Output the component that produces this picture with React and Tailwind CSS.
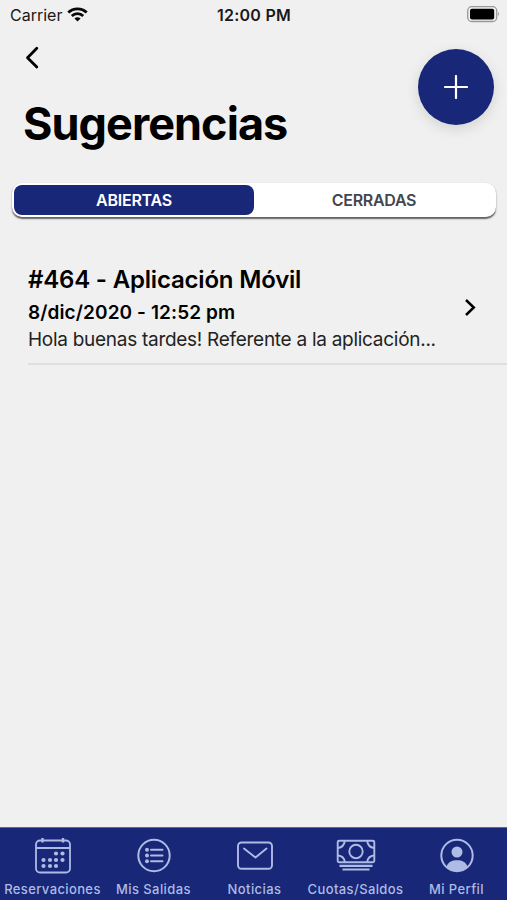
const tabs = [
  { label: 'Reservaciones', icon: CalendarIcon, spacing: 'tracking-[0.38px]' },
  { label: 'Mis Salidas', icon: ListIcon, spacing: 'tracking-[0.4px]' },
  { label: 'Noticias', icon: MailIcon, spacing: 'tracking-[0.45px]' },
  { label: 'Cuotas/Saldos', icon: CashIcon, spacing: 'tracking-[0.38px]' },
  { label: 'Mi Perfil', icon: ProfileIcon, spacing: 'tracking-[0.4px]' },
];

function CalendarIcon() {
  const dots = [
    [21, 15.5], [27.5, 15.5],
    [8.5, 22], [15, 22], [21, 22], [27.5, 22],
    [8.5, 28], [15, 28], [21, 28],
  ];
  return (
    <svg width="36" height="36" viewBox="0 0 36 36" fill="none" stroke="currentColor" strokeWidth="1.8">
      <rect x="1" y="2.5" width="34" height="32" rx="4" />
      <path d="M1 10H35" />
      <path d="M7.5 0v4.5M28 0v4.5" strokeWidth="2.4" />
      {dots.map(([x, y]) => (
        <circle key={`${x}-${y}`} cx={x} cy={y} r="2.1" fill="currentColor" stroke="none" />
      ))}
    </svg>
  );
}

function ListIcon() {
  return (
    <svg width="36" height="36" viewBox="0 0 36 36" fill="none" stroke="currentColor" strokeWidth="2">
      <circle cx="18" cy="17.5" r="15.7" />
      <path d="M15 11.7H26.500M15 17.500H26.500M15 23.300H26.500" strokeLinecap="round" />
      <g fill="currentColor" stroke="none">
        <circle cx="11" cy="11.7" r="2" />
        <circle cx="11" cy="17.5" r="2" />
        <circle cx="11" cy="23.3" r="2" />
      </g>
    </svg>
  );
}

function MailIcon() {
  return (
    <svg width="36" height="36" viewBox="0 0 36 36" fill="none" stroke="currentColor" strokeWidth="1.9" strokeLinecap="round" strokeLinejoin="round">
      <rect x="1" y="4.5" width="34" height="26.3" rx="3.5" />
      <path d="M7 10.500l11.500 9L29.500 10.500" />
    </svg>
  );
}

function CashIcon() {
  return (
    <svg width="40" height="36" viewBox="0 0 40 36" fill="none" stroke="currentColor" strokeWidth="1.9">
      <rect x="1.700" y="2.800" width="36.600" height="21.500" rx="1.500" />
      <circle cx="20" cy="13.500" r="6.700" />
      <path d="M2 10Q8 9 8.800 3M38 10Q32 9 31.200 3M2 17.500Q8 18 8.800 24M38 17.500Q32 18 31.200 24" />
      <path d="M3.500 27.800H36.500M6.500 31.500H33.500" strokeWidth="2.200" />
    </svg>
  );
}

function ProfileIcon() {
  return (
    <svg width="36" height="36" viewBox="0 0 36 36" fill="none" stroke="currentColor" strokeWidth="2">
      <circle cx="18" cy="17.500" r="15.700" />
      <circle cx="18" cy="14" r="5.500" fill="currentColor" stroke="none" />
      <path d="M7.500 28.500C9 24 13 22.200 18 22.200S27 24 28.500 28.500C25.500 31.500 22 33.300 18 33.300S10.500 31.500 7.500 28.500Z" fill="currentColor" stroke="none" />
    </svg>
  );
}

function StatusBar() {
  return (
    <div className="grid h-[30px] grid-cols-3 items-center pl-[10px] pr-[7px] text-[#191919]">
      <div className="flex items-center gap-[5px]">
        <span className="text-[16px] leading-5">Carrier</span>
        <svg width="21" height="16" viewBox="0 0 21 16" fill="none" stroke="#080808" strokeWidth="2.800">
          <path d="M1.300 5.600C6.300.6 14.700.6 19.700 5.600M4.800 9C8 5.900 13 5.900 16.200 9" />
          <path d="M10.500 14.600L7.400 11.500Q10.500 9 13.600 11.500Z" fill="#080808" stroke="none" />
        </svg>
      </div>
      <span className="whitespace-nowrap pr-[2px] text-center text-[16px] font-semibold leading-5 tracking-[0.25px]">12:00 PM</span>
      <svg className="justify-self-end" width="33" height="18" viewBox="0 0 33 18">
        <rect x="0.700" y="0.700" width="29" height="14.800" rx="4" fill="none" stroke="#999" strokeWidth="1.300" />
        <rect x="3" y="2.800" width="24.200" height="10.600" rx="2" fill="#000" />
        <path d="M31 6q2 2 0 4z" fill="#999" />
      </svg>
    </div>
  );
}

export default function App() {
  return (
    <div className="flex h-[900px] w-[507px] flex-col overflow-hidden bg-[#f0f0f0] font-['Inter','Liberation_Sans',sans-serif] text-black">
      <StatusBar />
      <header className="flex h-[153px] justify-between pl-[23px] pr-[13px]">
        <div className="pt-[16px]">
          <button aria-label="Volver" className="block">
            <svg width="18" height="24" viewBox="0 0 18 24" fill="none" stroke="currentColor" strokeWidth="2.800" strokeLinecap="round" strokeLinejoin="round">
              <path d="M13.800 2.300L4.500 11.700L13.800 21.100" />
            </svg>
          </button>
          <h1 className="mt-[27px] text-[45px] font-bold leading-[54px] tracking-[-0.95px]">Sugerencias</h1>
        </div>
        <button aria-label="Agregar" className="mt-[19px] flex size-[76px] items-center justify-center rounded-full bg-[#182777] text-white shadow-[0_4px_14px_rgba(0,0,0,0.12)]">
          <svg width="24" height="24" viewBox="0 0 24 24" stroke="currentColor" strokeWidth="2.200" strokeLinecap="round">
            <path d="M12 1V23M1 12H23" />
          </svg>
        </button>
      </header>

      <div className="ml-[12px] mr-[11px] flex h-[34px] rounded-[10px] bg-white p-[2px] text-[16px] font-semibold shadow-[0_1.5px_1.5px_rgba(0,0,0,0.6)]">
        <button className="flex w-[240px] items-center justify-center rounded-[8px] bg-[#182777] tracking-[-0.25px] text-white">ABIERTAS</button>
        <button className="flex flex-1 items-center justify-center tracking-[-0.3px] text-[#434650]">CERRADAS</button>
      </div>

      <main className="flex-1 pl-[28px] pt-[47px]">
        <article className="flex h-[101px] items-center justify-between border-b-2 border-[#dfdfe0] pb-[10px] pr-[29px]">
          <div>
            <h2 className="text-[24px] font-semibold leading-[32px] tracking-[-0.19px]">#464 - Aplicación Móvil</h2>
            <p className="mt-[3px] text-[19px] font-semibold leading-[27px] tracking-[0.1px]">8/dic/2020 - 12:52 pm</p>
            <p className="text-[19px] leading-[27px] tracking-[-0.28px] text-[#222]">Hola buenas tardes! Referente a la aplicación...</p>
          </div>
          <svg className="mb-[2px]" width="16" height="20" viewBox="0 0 16 20" fill="none" stroke="currentColor" strokeWidth="2.500">
            <path d="M4 2L11.800 9.500L4 17" />
          </svg>
        </article>
      </main>

      <nav className="grid h-[73px] grid-cols-5 border-t border-[#5d679e] bg-[#182777] pl-[2px] pt-[10px] text-[#aebbe5]">
        {tabs.map(({ label, icon: Icon, spacing }) => (
          <button key={label} className="flex flex-col items-center">
            <Icon />
            <span className={`mt-[6px] whitespace-nowrap text-[13px] font-medium leading-[18px] ${spacing}`}>{label}</span>
          </button>
        ))}
      </nav>
    </div>
  );
}
